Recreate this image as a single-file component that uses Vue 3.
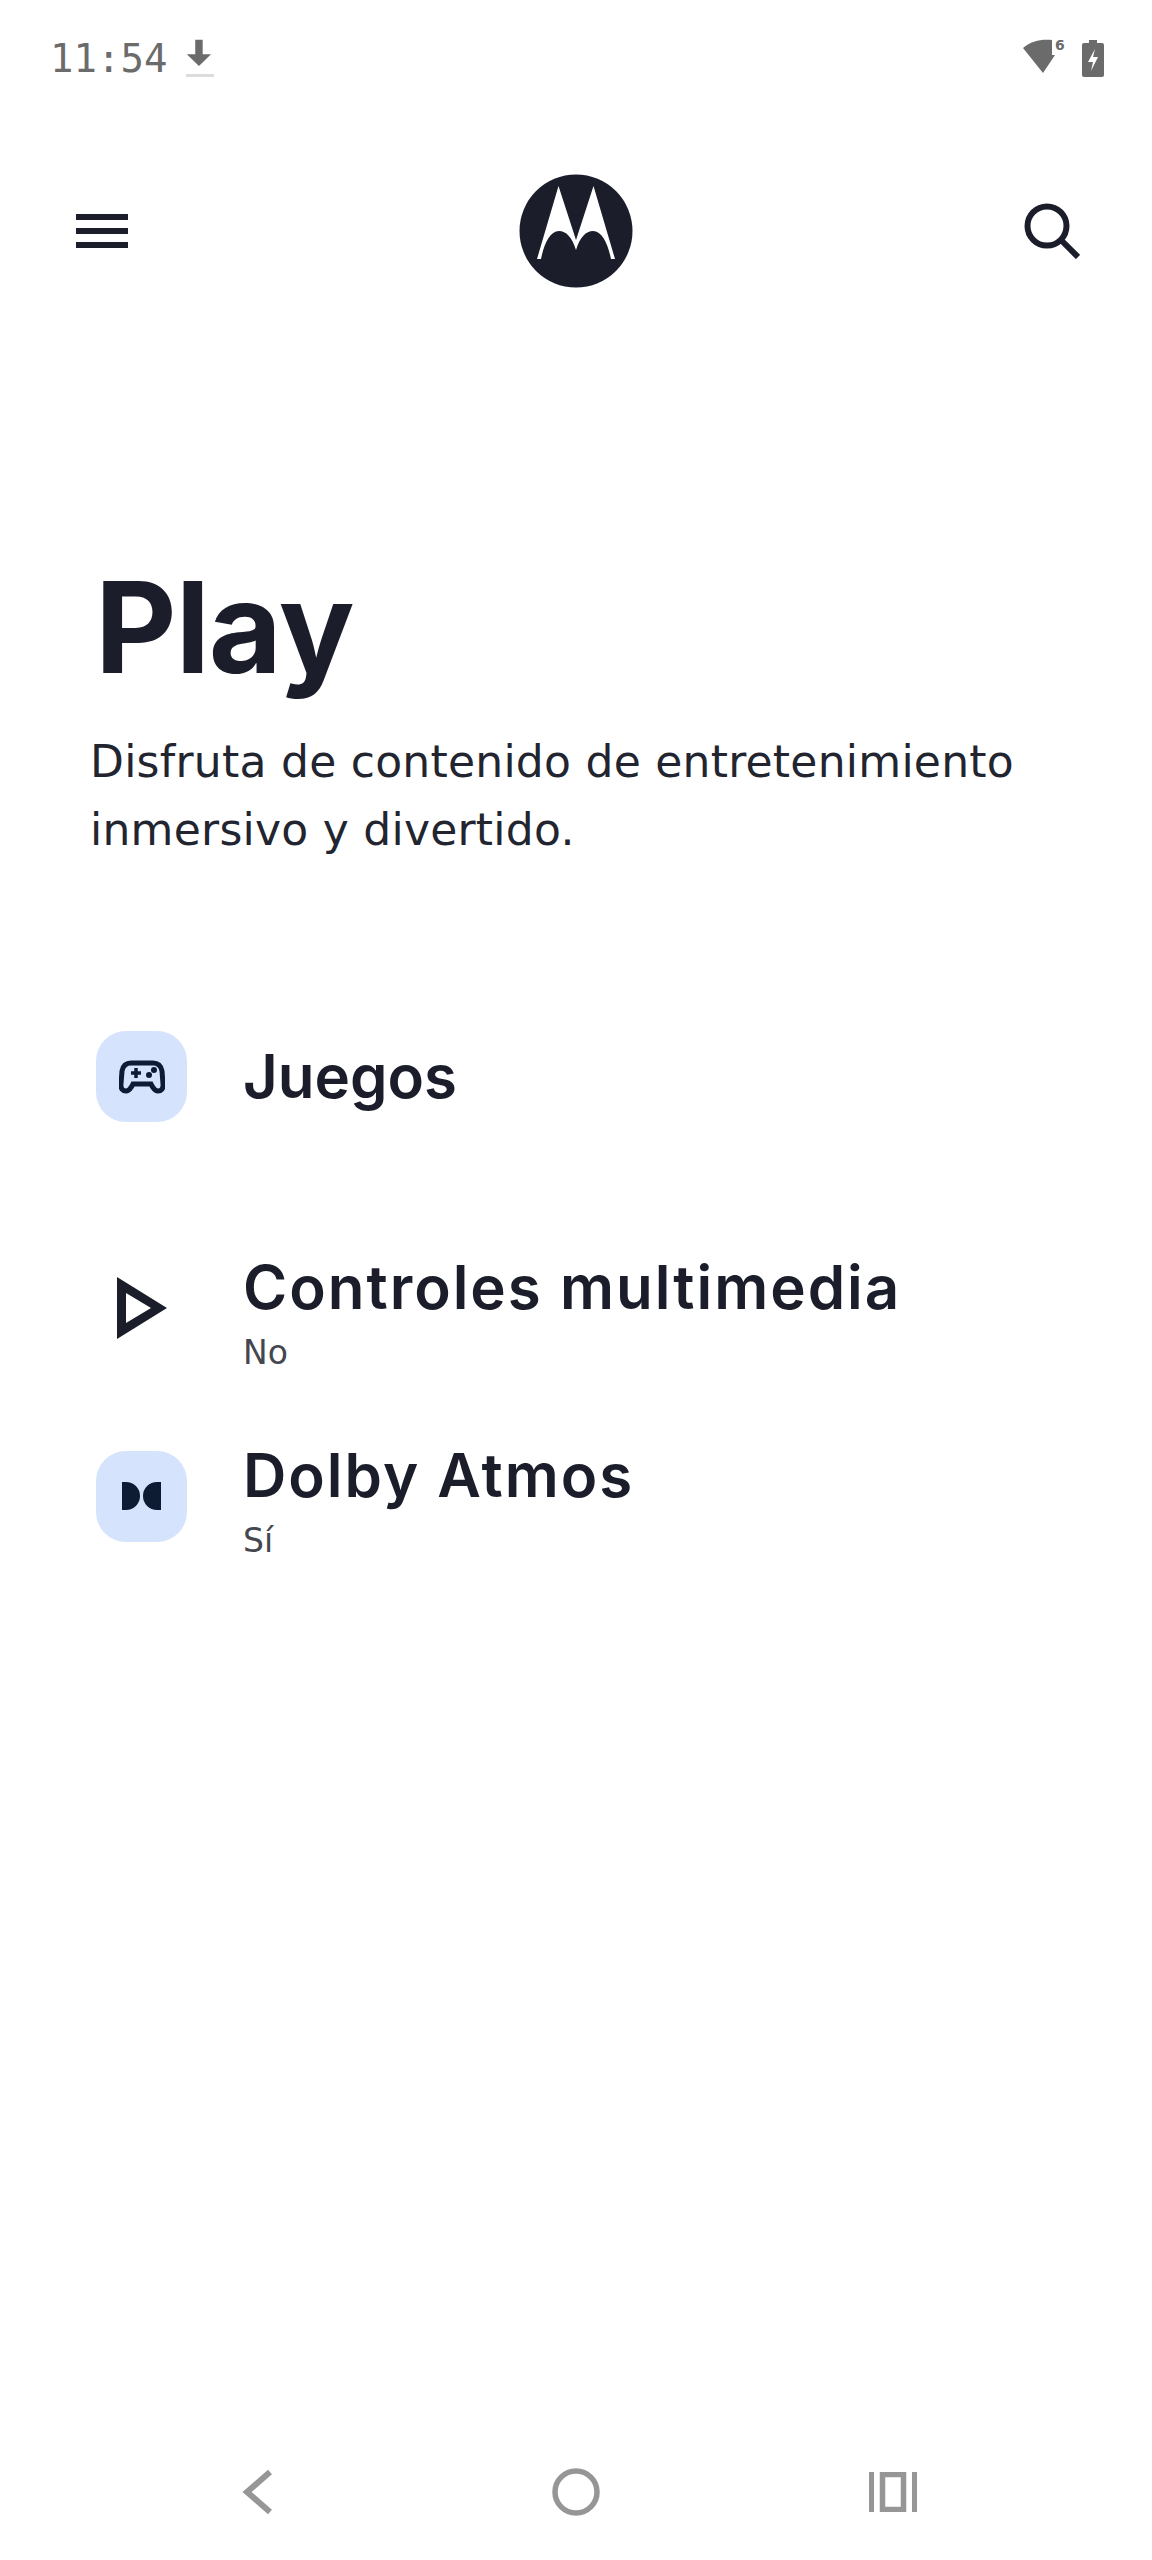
<template>
  <div class="screen">
    <div class="status">
      <div class="status-left">
        <span class="time">11:54</span>
        <svg width="30" height="40" viewBox="0 0 30 40">
          <path d="M11 2h8v16h9L15 31 2 18h9z" fill="#6b6b6b" transform="scale(.93 .9)" />
          <rect x="1" y="36" width="28" height="3" fill="#dcdcdc" />
        </svg>
      </div>
      <div class="status-right">
        <svg width="44" height="40" viewBox="0 0 44 40">
          <path d="M0 10C8 3 18 1 29 2v15l3 0L20 35z" fill="#6b6b6b" />
          <text x="32" y="12" class="six">6</text>
        </svg>
        <svg width="22" height="37" viewBox="0 0 22 37">
          <path d="M7 0h8v3h5a2 2 0 0 1 2 2v30a2 2 0 0 1-2 2H2a2 2 0 0 1-2-2V5a2 2 0 0 1 2-2h5z" fill="#6b6b6b" />
          <path d="M13 9l-7 13h5l-2 9 7-14h-5z" fill="#fff" />
        </svg>
      </div>
    </div>

    <div class="toolbar">
      <svg width="52" height="34" viewBox="0 0 52 34">
        <path d="M0 3h52M0 17h52M0 31h52" stroke="#1b1e2a" stroke-width="6" />
      </svg>
      <svg width="114" height="114" viewBox="0 0 114 114">
        <circle cx="57" cy="57" r="56.500" fill="#1b1e2a" />
        <path d="M39.500 12 57 66 74.500 12 96 85H92C89 70 83 57 74 57 67 57 61 63 57 76 53 63 47 57 40 57 31 57 25 70 22 85H18z" fill="#fff" />
      </svg>
      <svg width="56" height="56" viewBox="0 0 56 56">
        <circle cx="23" cy="23" r="19.500" fill="none" stroke="#1b1e2a" stroke-width="6" />
        <path d="M37 37l17 17" stroke="#1b1e2a" stroke-width="6" />
      </svg>
    </div>

    <div class="hero">
      <h1>Play</h1>
      <p>Disfruta de contenido de entretenimiento<br />inmersivo y divertido.</p>
    </div>

    <div class="list">
      <div class="row first">
        <div class="icon tinted">
          <svg width="46" height="34" viewBox="0 0 46 34" fill="none">
            <path d="M12 3h22c5 0 8 3 9 8l1 13c.5 5-2 7-5 7-3 0-4-2-6-5l-1-2H14l-1 2c-2 3-3 5-6 5-3 0-5.500-2-5-7l1-13c1-5 4-8 9-8z" stroke="#0d1b33" stroke-width="5" />
            <path d="M12 13h10M17 8v10" stroke="#0d1b33" stroke-width="3.500" />
            <circle cx="35" cy="10" r="3" fill="#0d1b33" />
            <circle cx="30" cy="15" r="3" fill="#0d1b33" />
          </svg>
        </div>
        <div class="text"><div class="title">Juegos</div></div>
      </div>

      <div class="row second">
        <div class="icon">
          <svg width="50" height="62" viewBox="0 0 50 62">
            <path d="M0 0l50 31L0 62z M9 16v30l25-15z" fill="#1b1e2a" fill-rule="evenodd" />
          </svg>
        </div>
        <div class="text">
          <div class="title wide">Controles multimedia</div>
          <div class="sub">No</div>
        </div>
      </div>

      <div class="row third">
        <div class="icon tinted">
          <svg width="39" height="28" viewBox="0 0 39 28">
            <path d="M0 0h4a14 14 0 0 1 0 28H0zM39 0h-4a14 14 0 0 0 0 28h4z" fill="#0d1b33" />
          </svg>
        </div>
        <div class="text">
          <div class="title wide">Dolby Atmos</div>
          <div class="sub">Sí</div>
        </div>
      </div>
    </div>

    <div class="nav">
      <svg width="48" height="46" viewBox="0 0 48 46" fill="none">
        <path d="M35 3 12 23l23 20" stroke="#969696" stroke-width="6" />
      </svg>
      <svg width="48" height="48" viewBox="0 0 48 48" fill="none">
        <circle cx="24" cy="24" r="21" stroke="#969696" stroke-width="5.500" />
      </svg>
      <svg width="48" height="40" viewBox="0 0 48 40" fill="none">
        <path d="M2.500 0v40M45.500 0v40" stroke="#969696" stroke-width="5" />
        <rect x="13.500" y="2.500" width="21" height="35" stroke="#969696" stroke-width="5.500" />
      </svg>
    </div>
  </div>
</template>

<script setup>
</script>

<style>
html, body { background: #fff; }
</style>

<style scoped>
.screen {
  height: 2560px;
  display: flex;
  flex-direction: column;
  background: #fff;
  color: #1b1e2a;
  font-family: "DejaVu Sans", sans-serif;
}
.status {
  height: 116px;
  padding: 0 48px 0 50px;
  display: flex;
  justify-content: space-between;
  align-items: center;
  box-sizing: border-box;
}
.status-left, .status-right {
  display: flex;
  align-items: center;
}
.status-left { gap: 18px; }
.status-right { gap: 15px; }
.time {
  font-family: "DejaVu Sans Mono", monospace;
  font-size: 39px;
  color: #6b6b6b;
}
.six {
  font-family: "DejaVu Sans", sans-serif;
  font-size: 14px;
  font-weight: 700;
  fill: #6b6b6b;
}
.toolbar {
  height: 114px;
  margin-top: 58px;
  padding: 0 72px 0 76px;
  display: flex;
  justify-content: space-between;
  align-items: center;
}
.hero { padding-left: 90px; margin-top: 264px; }
h1 {
  margin: 0 0 0 5px;
  font-family: Inter, sans-serif;
  font-size: 126px;
  font-weight: 700;
  line-height: 150px;
  letter-spacing: -1px;
}
p {
  margin: 26px 0 0;
  font-size: 44px;
  line-height: 68px;
  letter-spacing: .25px;
  color: #22252f;
}
.list { padding-left: 96px; margin-top: 167px; }
.row {
  display: flex;
  align-items: center;
  gap: 56px;
}
.second { margin-top: 123px; }
.third { margin-top: 62px; }
.icon {
  width: 91px;
  height: 91px;
  flex: none;
  display: flex;
  align-items: center;
  justify-content: center;
}
.tinted {
  background: #d6e3fd;
  border-radius: 30px;
}
.title {
  font-family: Inter, sans-serif;
  font-size: 60px;
  font-weight: 600;
  line-height: 85px;
}
.wide { letter-spacing: 2px; }
.sub {
  margin-top: 5px;
  font-size: 33px;
  line-height: 36px;
  color: #444650;
}
.nav {
  margin-top: auto;
  margin-bottom: 12px;
  height: 112px;
  padding: 0 235px;
  display: flex;
  align-items: center;
  justify-content: space-between;
  box-sizing: border-box;
}
</style>
